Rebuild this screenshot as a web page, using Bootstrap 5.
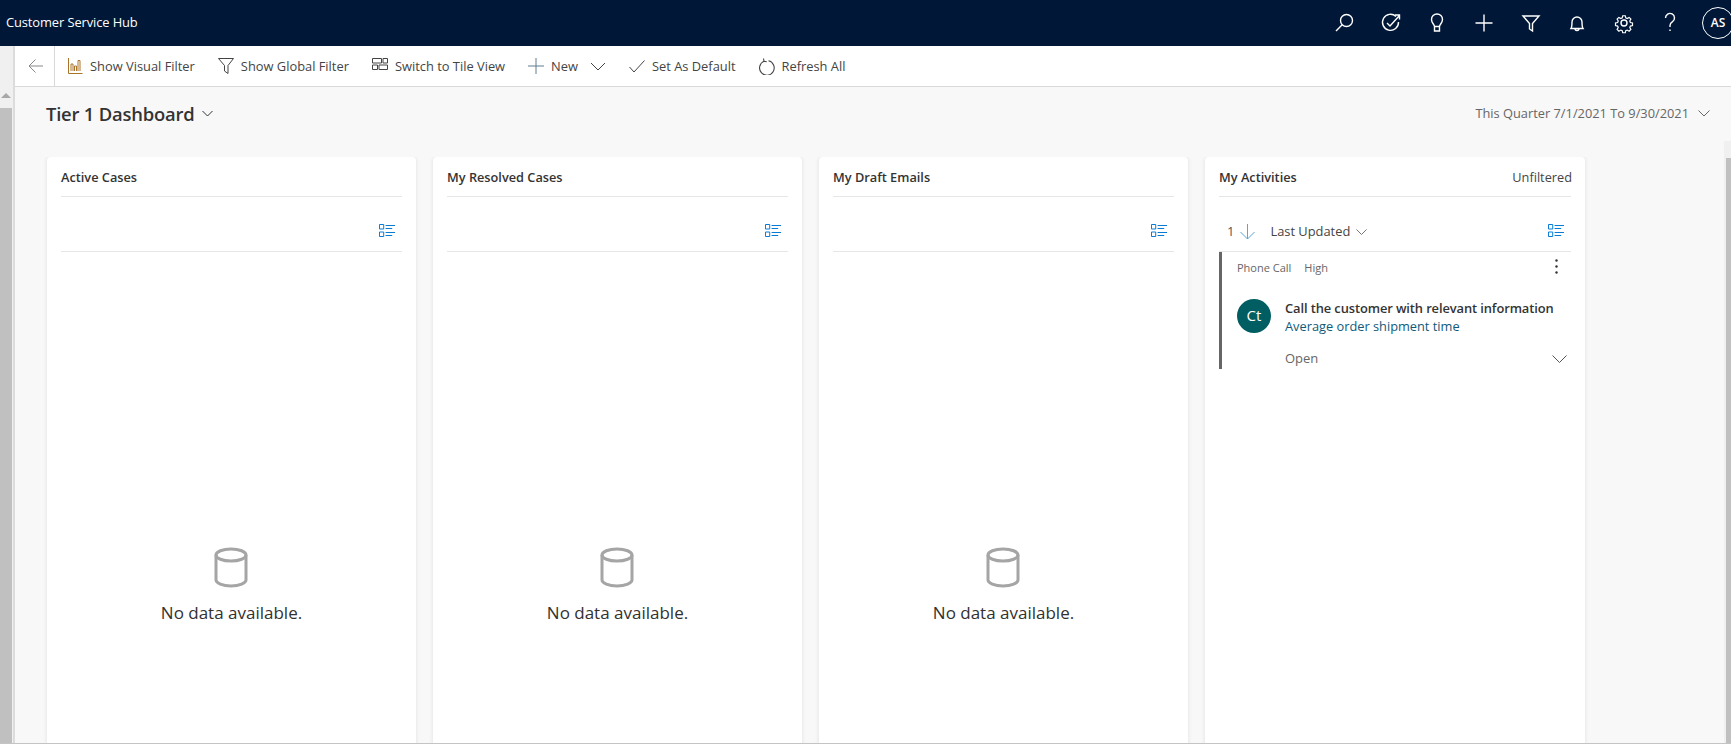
<!DOCTYPE html>
<html lang="en">
<head>
<meta charset="utf-8">
<title>Customer Service Hub</title>
<link href="https://cdn.jsdelivr.net/npm/bootstrap@5.3.0/dist/css/bootstrap.min.css" rel="stylesheet">
<style>
html,body{height:100%;overflow:hidden}
body{font-family:"Open Sans","Noto Sans",sans-serif;color:#323130;background:#f8f8f8;font-size:13px;width:1731px;height:744px}
svg{display:block;flex:none;fill:none;stroke:currentColor}
.topbar{height:46px;background:#001738;color:#fff;padding:0 0 0 6px;overflow:hidden;flex:none}
.app-name{font-size:12.9px;letter-spacing:-.1px}
.top-icons{gap:22.6px;margin-right:-3px}
.top-icons svg{width:24px;height:24px;stroke-width:1.4}
.avatar-top{width:32px;height:32px;border:1px solid #fff;border-radius:50%;font-size:12px;margin-left:-3px;font-weight:600}
.shell{flex:1;min-height:0}
.rail{width:15px;background:#f0f0f0;border-right:2px solid #dcdcdc;flex:none}
.rail-arrow{width:0;height:0;border:5px solid transparent;border-top:0;border-bottom:5px solid #a8a8a8;margin:0 0 0 1px;position:relative;top:47px}
.rail-thumb{width:12px;background:#c0c0c0;margin-top:57px;flex:1}
.content{min-width:0;overflow:hidden}
.cmdbar{height:41px;background:#fff;border-bottom:1px solid #d9d9d9;flex:none}
.back-cell{width:40px;height:40px;border-right:1px solid #d9d9d9;color:#8a8886;padding-left:13px}
.cmd{font-size:12.87px;color:#444;white-space:nowrap}
.cmd svg{color:#444}
.cmd-label{margin-left:7px;padding-top:2px}
.cmd-gap{margin-left:23px}
.dash-head{height:70px;padding:0 21px 17px 31px;flex:none}
.dash-title{font-size:18.4px;font-weight:600;color:#333;letter-spacing:-.2px}
.date-range{font-size:12.82px;color:#666}
.board{display:grid;grid-template-columns:repeat(3,369px) 380px;gap:17px;padding-left:32px;flex:1;min-height:0;overflow:hidden}
.panel{height:700px;border:0;border-radius:4px;box-shadow:0 0 4px rgba(0,0,0,.1);background:#fff;padding:0 14px}
.panel-head{height:40px;border-bottom:1px solid #e6e6e6;background:none;padding:2px 0 0;font-size:12.75px;font-weight:600;color:#333;border-radius:0}
.panel-tools{height:55px;border-bottom:1px solid #e6e6e6;padding:12px 7px 0 0;color:#0078d4}
.empty{padding-top:295px;color:#323130}
.empty svg{color:#a5a5a5;stroke-width:3;margin-right:2px}
.empty-text{font-size:17px;font-weight:500;margin-top:13px;line-height:24px}
.unfiltered{font-weight:400;color:#444;margin-right:-1px}
.sort-num{font-size:13px;color:#555;padding-left:8px;padding-top:3px}
.sort-label{padding-top:3px;margin-left:15px}
.activity{border-left:3px solid #666;height:117px;padding-left:15px;padding-right:4px}
.meta{font-size:11px;color:#666;padding-top:8px;height:36px}
.avatar-ct{width:34px;height:34px;background:#005e62;color:#fff;font-size:15px;flex:none}
.act-text{margin-left:14px;padding-top:3px}
.act-title{font-size:12.9px;font-weight:600;color:#333;line-height:18px;white-space:nowrap;letter-spacing:-.1px}
.act-sub{font-size:12.8px;color:#0f5a7a;line-height:18px;white-space:nowrap}
.act-open{font-size:13px;color:#666}
.right-track{width:7px;background:#f0f0f0;flex:none;margin-top:-16px}
.right-thumb{width:5px;background:#c0c0c0;margin:17px 0 0 2px;height:100%}
.bottom-line{height:1px;background:#c4c4c4;flex:none}
</style>
</head>
<body class="d-flex flex-column">
<nav class="topbar d-flex align-items-center justify-content-between">
  <span class="app-name">Customer Service Hub</span>
  <div class="top-icons d-flex align-items-center">
    <svg viewBox="0 0 24 24"><circle cx="14.5" cy="9.5" r="6"/><path d="M10.2 13.8 4 20"/></svg>
    <svg viewBox="0 0 24 24"><path d="M17 5.500A8 8 0 1 0 19.500 11"/><path d="m8 12 3 3 9-10M16 4h4.500v4.500"/></svg>
    <svg viewBox="0 0 24 24"><path d="M9.500 15.500c0-2-3-3.500-3-7a5.500 5.500 0 0 1 11 0c0 3.500-3 5-3 7zM9.500 15.500V20h5v-4.500"/></svg>
    <svg viewBox="0 0 24 24"><path d="M12 3.500v17M3.500 12h17"/></svg>
    <svg viewBox="0 0 24 24"><path d="M4 5h16l-6.500 7.500V20l-3-2v-5.500z"/></svg>
    <svg viewBox="0 0 24 24"><path d="M6 17.500c1-1.500 1-3 1-6.500a5 5 0 0 1 10 0c0 3.500 0 5 1 6.500zM10 17.500a2 2 0 0 0 4 0"/></svg>
    <svg viewBox="0 0 24 24"><circle cx="12" cy="12" r="3"/><path d="m10.500 3.500h3l.6 2.500 1.700.7 2.200-1.300 2.100 2.100-1.300 2.200.7 1.700 2.500.6v3l-2.500.6-.7 1.700 1.300 2.200-2.100 2.100-2.200-1.300-1.700.7-.6 2.500h-3l-.6-2.500-1.700-.7-2.200 1.300-2.100-2.100 1.300-2.200-.7-1.700-2.500-.6v-3l2.500-.6.7-1.700-1.300-2.200 2.100-2.100 2.200 1.300 1.700-.7z" transform="translate(1.800 1.800) scale(.85)"/></svg>
    <svg viewBox="0 0 24 24"><path d="M7.500 7a4.500 4.500 0 1 1 7 3.700c-1.500 1-2.500 1.800-2.500 3.800v1.500"/><path d="M12 18.500v1.500"/></svg>
    <div class="avatar-top d-flex align-items-center justify-content-center">AS</div>
  </div>
</nav>
<div class="shell d-flex">
  <div class="rail d-flex flex-column"><div class="rail-arrow"></div><div class="rail-thumb"></div></div>
  <div class="content flex-grow-1 d-flex flex-column">
    <div class="cmdbar d-flex align-items-center">
      <div class="back-cell d-flex align-items-center"><svg width="16" height="16" viewBox="0 0 16 16" stroke-width="1"><path d="M15 8H1.500M7.500 1.500 1 8l6.500 6.500"/></svg></div>
      <div class="cmd d-flex align-items-center" style="margin-left:13px"><svg width="15" height="16" viewBox="0 0 15 16" style="color:#a9742a"><path d="M.5 0v15.500h14M3 13V6h2v7M6.500 13V8h2v5M10 13V2.500h2V13"/></svg><span class="cmd-label">Show Visual Filter</span></div>
      <div class="cmd cmd-gap d-flex align-items-center"><svg width="16" height="16" viewBox="0 0 16 16"><path d="M.5.500h15L10 7.500v8L6.500 13V7.500z"/></svg><span class="cmd-label">Show Global Filter</span></div>
      <div class="cmd cmd-gap d-flex align-items-center"><svg width="16" height="12" viewBox="0 0 16 12" class="mb-1"><path d="M.5.500h9v4.500h-9zM11 .5h4.500V5H11zM.5 7h5v4.500h-5zM7 7h8.500v4.500H7z"/></svg><span class="cmd-label">Switch to Tile View</span></div>
      <div class="cmd d-flex align-items-center" style="margin-left:23px"><svg width="16" height="16" viewBox="0 0 16 16" style="color:#5f7d8f"><path d="M8 0v16M0 8h16"/></svg><span class="cmd-label">New</span></div>
      <svg class="cmd" style="margin-left:12px" width="16" height="9" viewBox="0 0 16 9"><path d="m1 1 7 7 7-7"/></svg>
      <div class="cmd d-flex align-items-center" style="margin-left:23px"><svg width="16" height="13" viewBox="0 0 16 13"><path d="m.5 7 4.500 5L15.500.5"/></svg><span class="cmd-label">Set As Default</span></div>
      <div class="cmd cmd-gap d-flex align-items-center"><svg width="16" height="17" viewBox="0 0 16 17" stroke-width="1.100"><path d="M5 3.200a7.300 7.300 0 1 0 4.500-.4M4.500 .5 5 3.200l2.600.4"/></svg><span class="cmd-label">Refresh All</span></div>
    </div>
    <div class="dash-head d-flex align-items-center justify-content-between">
      <div class="d-flex align-items-center"><span class="dash-title">Tier 1 Dashboard</span><svg class="ms-2" style="color:#333" width="11" height="7" viewBox="0 0 11 7"><path d="m.5 1 5 5 5-5"/></svg></div>
      <div class="d-flex align-items-center date-range"><span>This Quarter 7/1/2021 To 9/30/2021</span><svg style="margin-left:9px" width="12" height="7" viewBox="0 0 12 7"><path d="m.5.500 5.500 5.500 5.500-5.500"/></svg></div>
    </div>
    <div class="d-flex flex-grow-1" style="min-height:0">
    <div class="board flex-grow-1">
      <div class="card panel">
        <div class="card-header panel-head d-flex align-items-center"><span>Active Cases</span></div>
        <div class="panel-tools d-flex align-items-center justify-content-end"><svg width="16" height="13" viewBox="0 0 17 13" preserveAspectRatio="none"><path d="M.5.500h4.500v4.500H.5zM.5 8h4.500v4.500H.5zM7 1.500h10M7 4.500h7M7 8.500h10M7 11.500h7"/></svg></div>
        <div class="empty d-flex flex-column align-items-center"><svg width="34" height="41" viewBox="0 0 34 41"><path d="M2 8v25c0 3 6.500 6 15 6s15-3 15-6V8"/><ellipse cx="17" cy="8" rx="15" ry="6"/></svg><div class="empty-text">No data available.</div></div>
      </div>
      <div class="card panel">
        <div class="card-header panel-head d-flex align-items-center"><span>My Resolved Cases</span></div>
        <div class="panel-tools d-flex align-items-center justify-content-end"><svg width="16" height="13" viewBox="0 0 17 13" preserveAspectRatio="none"><path d="M.5.500h4.500v4.500H.5zM.5 8h4.500v4.500H.5zM7 1.500h10M7 4.500h7M7 8.500h10M7 11.500h7"/></svg></div>
        <div class="empty d-flex flex-column align-items-center"><svg width="34" height="41" viewBox="0 0 34 41"><path d="M2 8v25c0 3 6.500 6 15 6s15-3 15-6V8"/><ellipse cx="17" cy="8" rx="15" ry="6"/></svg><div class="empty-text">No data available.</div></div>
      </div>
      <div class="card panel">
        <div class="card-header panel-head d-flex align-items-center"><span>My Draft Emails</span></div>
        <div class="panel-tools d-flex align-items-center justify-content-end"><svg width="16" height="13" viewBox="0 0 17 13" preserveAspectRatio="none"><path d="M.5.500h4.500v4.500H.5zM.5 8h4.500v4.500H.5zM7 1.500h10M7 4.500h7M7 8.500h10M7 11.500h7"/></svg></div>
        <div class="empty d-flex flex-column align-items-center"><svg width="34" height="41" viewBox="0 0 34 41"><path d="M2 8v25c0 3 6.500 6 15 6s15-3 15-6V8"/><ellipse cx="17" cy="8" rx="15" ry="6"/></svg><div class="empty-text">No data available.</div></div>
      </div>
      <div class="card panel">
        <div class="card-header panel-head d-flex align-items-center justify-content-between"><span>My Activities</span><span class="unfiltered">Unfiltered</span></div>
        <div class="panel-tools d-flex align-items-center">
          <span class="sort-num">1</span>
          <svg style="margin:3px 0 0 6px;color:#5ba4d6" width="15" height="16" viewBox="0 0 15 16"><path d="M7.500 0v15M.5 8l7 7 7-7"/></svg>
          <span class="cmd sort-label">Last Updated</span>
          <svg style="margin:3px 0 0 6px;color:#777" width="11" height="6" viewBox="0 0 11 6"><path d="m.5.500 5 5 5-5"/></svg>
          <svg class="ms-auto" width="16" height="13" viewBox="0 0 17 13" preserveAspectRatio="none"><path d="M.5.500h4.500v4.500H.5zM.5 8h4.500v4.500H.5zM7 1.500h10M7 4.500h7M7 8.500h10M7 11.500h7"/></svg>
        </div>
        <div class="activity">
          <div class="meta d-flex align-items-start"><span>Phone Call</span><span style="margin-left:13px">High</span><span class="ms-auto" style="margin:-1px 9px 0 0"><svg width="3" height="15" viewBox="0 0 3 15" style="fill:#333;stroke:none"><circle cx="1.500" cy="1.500" r="1.200"/><circle cx="1.500" cy="7.500" r="1.200"/><circle cx="1.500" cy="13.500" r="1.200"/></svg></span></div>
          <div class="d-flex align-items-center" style="margin-top:8px">
            <div class="avatar-ct rounded-circle d-flex align-items-center justify-content-center">Ct</div>
            <div class="act-text"><div class="act-title">Call the customer with relevant information</div><div class="act-sub">Average order shipment time</div></div>
          </div>
          <div class="d-flex align-items-center justify-content-between" style="margin-top:14px;padding-left:48px"><span class="act-open">Open</span><svg style="color:#555" width="15" height="8" viewBox="0 0 15 8"><path d="m.5.500 7 7 7-7"/></svg></div>
        </div>
      </div>
    </div>
    <div class="right-track"><div class="right-thumb"></div></div>
    </div>
  </div>
</div>
<div class="bottom-line"></div>
<script src="https://cdn.jsdelivr.net/npm/bootstrap@5.3.0/dist/js/bootstrap.bundle.min.js"></script>
</body>
</html>
